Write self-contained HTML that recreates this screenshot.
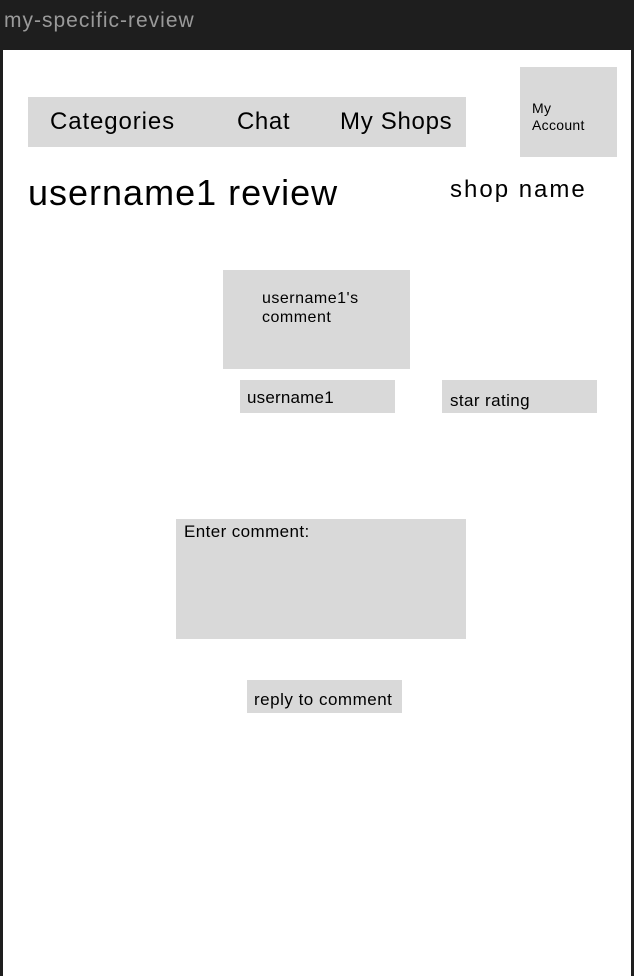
<!DOCTYPE html>
<html><head><style>
*{margin:0;padding:0;box-sizing:border-box}
body{width:634px;height:976px;background:#1e1e1e;position:relative;overflow:hidden;font-family:"Liberation Sans",sans-serif;color:#000}
.t{position:absolute;left:4px;top:9px;color:#9a9a9a;font-size:21px;letter-spacing:1px}
.f{position:absolute;left:3px;top:50px;width:628px;height:926px;background:#fff}
.b{position:absolute;background:#d9d9d9}
.a{position:absolute;white-space:nowrap}
</style></head><body>
<div class="t">my-specific-review</div>
<div class="f"></div>
<div class="b" style="left:28px;top:97px;width:438px;height:50px"></div>
<div class="a" style="left:50px;top:108px;font-size:24px;letter-spacing:0.9px">Categories</div>
<div class="a" style="left:237px;top:108px;font-size:24px;letter-spacing:0.6px">Chat</div>
<div class="a" style="left:340px;top:108px;font-size:24px;letter-spacing:0.7px">My Shops</div>
<div class="b" style="left:520px;top:67px;width:97px;height:90px"></div>
<div class="a" style="left:532px;top:100px;font-size:14px;line-height:17px;letter-spacing:0.3px">My<br>Account</div>
<div class="a" style="left:28px;top:172px;font-size:36px;letter-spacing:1px">username1 review</div>
<div class="a" style="left:450px;top:176px;font-size:24px;letter-spacing:2px">shop name</div>
<div class="b" style="left:223px;top:270px;width:187px;height:99px"></div>
<div class="a" style="left:262px;top:289px;font-size:16px;line-height:19px;letter-spacing:0.5px">username1's<br>comment</div>
<div class="b" style="left:240px;top:380px;width:155px;height:33px"></div>
<div class="a" style="left:247px;top:388px;font-size:17px;letter-spacing:0.2px">username1</div>
<div class="b" style="left:442px;top:380px;width:155px;height:33px"></div>
<div class="a" style="left:450px;top:391px;font-size:17px;letter-spacing:0.4px">star rating</div>
<div class="b" style="left:176px;top:519px;width:290px;height:120px"></div>
<div class="a" style="left:184px;top:522px;font-size:17px;letter-spacing:0.4px">Enter comment:</div>
<div class="b" style="left:247px;top:680px;width:155px;height:33px"></div>
<div class="a" style="left:254px;top:690px;font-size:17px;letter-spacing:0.5px">reply to comment</div>
</body></html>
